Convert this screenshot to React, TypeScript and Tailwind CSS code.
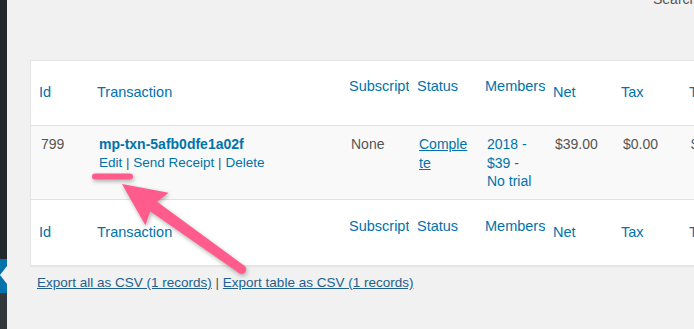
import React from "react";

const cols = "grid grid-cols-[58px_252px_68px_68px_68px_68px_68px_68px]";

function HeadRow({ bottom }: { bottom?: boolean }) {
  const cell =
    "flex items-center overflow-hidden whitespace-nowrap px-[8px] text-[14.5px] text-[#0073aa]";
  const sort = "pb-[12px]";
  return (
    <div className={`${cols} h-[65px] ${bottom ? "" : "border-b border-[#e1e1e1]"}`}>
      <div className={cell}>Id</div>
      <div className={cell}>Transaction</div>
      <div className={`${cell} ${sort}`}>Subscription</div>
      <div className={`${cell} ${sort}`}>Status</div>
      <div className={`${cell} ${sort}`}>Membership</div>
      <div className={cell}>Net</div>
      <div className={cell}>Tax</div>
      <div className={cell}>Total</div>
    </div>
  );
}

export default function App() {
  const td = "pl-[10px] pr-[8px] pt-[9px] text-[14px] leading-[18.5px] text-[#555]";
  return (
    <div className="relative flex h-[329px] w-[694px] overflow-hidden bg-[#f1f1f1] font-['Liberation_Sans',Arial,sans-serif]">
      {/* admin sidebar sliver */}
      <div className="flex w-[7px] shrink-0 flex-col">
        <div className="h-[259px] bg-[#23282d]" />
        <div className="relative h-[34px] bg-[#0073aa]">
          <svg className="absolute left-0 top-[7px]" width="7" height="18" viewBox="0 0 7 18">
            <polygon points="0,9 7,0 7,18" fill="#f1f1f1" />
          </svg>
        </div>
        <div className="flex-1 bg-[#32373c]" />
      </div>

      {/* main content */}
      <div className="flex min-w-0 flex-1 flex-col overflow-hidden pl-[23px]">
        <div className="flex h-[60px] shrink-0 pl-[623px]">
          <div className="-mt-[11px] whitespace-nowrap text-[14px] leading-[20px] text-[#555]">
            Search Transactions
          </div>
        </div>

        <div className="w-[720px] shrink-0 border border-[#e5e5e5] bg-white shadow-[0_1px_1px_rgba(0,0,0,0.04)]">
          <HeadRow />
          <div className={`${cols} h-[74px] border-b border-[#e1e1e1] bg-[#f9f9f9]`}>
            <div className={td}>799</div>
            <div className={td}>
              <div className="font-bold text-[#0073aa]">mp-txn-5afb0dfe1a02f</div>
              <div className="text-[13.5px] text-[#555]">
                <span className="text-[#0073aa]">Edit</span> |{" "}
                <span className="text-[#0073aa]">Send Receipt</span> |{" "}
                <span className="text-[#0073aa]">Delete</span>
              </div>
            </div>
            <div className={td}>None</div>
            <div className={`${td} break-all`}>
              <span className="text-[#0073aa] underline">Complete</span>
            </div>
            <div className={`${td} text-[#0073aa]`}>
              <span className="text-[#0073aa]">2018 - $39 - No trial</span>
            </div>
            <div className={td}>$39.00</div>
            <div className={td}>$0.00</div>
            <div className={td}>$39.00</div>
          </div>
          <HeadRow bottom />
        </div>

        <div className="mt-[8px] whitespace-nowrap pl-[7px] text-[13.5px] leading-[18px] text-[#555]">
          <span className="text-[#21618f] underline">Export all as CSV (1 records)</span> |{" "}
          <span className="text-[#21618f] underline">Export table as CSV (1 records)</span>
        </div>
      </div>

      {/* annotation overlay */}
      <svg
        className="pointer-events-none absolute left-0 top-0 drop-shadow-[1px_2px_2px_rgba(0,0,0,0.3)]"
        width="694"
        height="329"
        viewBox="0 0 694 329"
      >
        <line x1="95" y1="176.5" x2="130" y2="176.5" stroke="#ff5b8d" strokeWidth="6" strokeLinecap="round" />
        <g transform="translate(122 184) rotate(35.5)" fill="#ff5b8d">
          <polygon points="0,0 43,-20 37,0 43,20" />
          <polygon points="30,-6 147,-4.5 147,4.5 30,6" />
          <circle cx="147" cy="0" r="4.5" />
        </g>
      </svg>
    </div>
  );
}
